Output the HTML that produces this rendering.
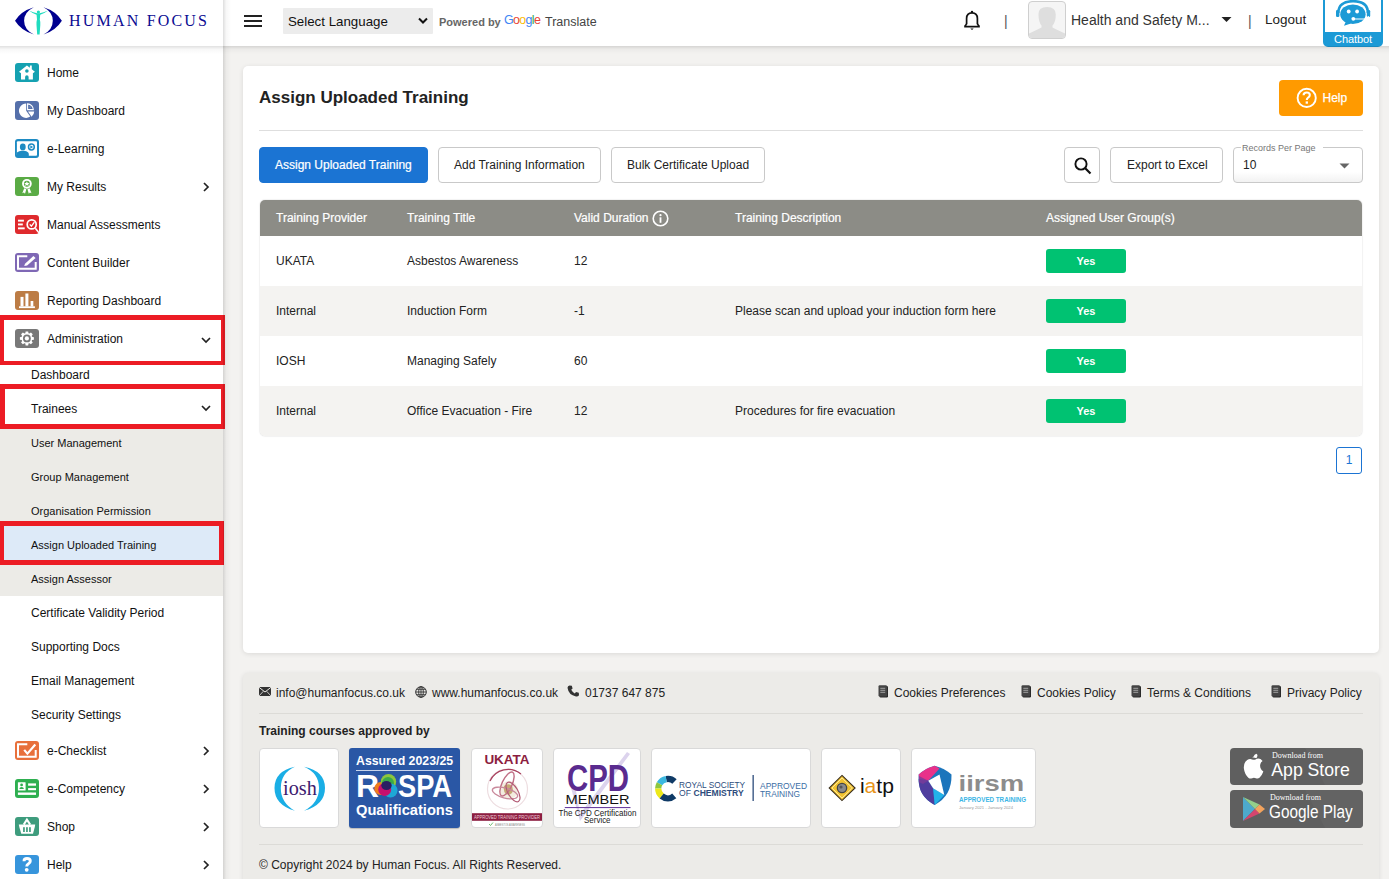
<!DOCTYPE html>
<html><head><meta charset="utf-8">
<style>
*{box-sizing:border-box;margin:0;padding:0}
html,body{width:1389px;height:879px;overflow:hidden}
body{position:relative;background:#f3f2f0;font-family:"Liberation Sans",sans-serif;color:#222;font-size:12px}
.a{position:absolute}
.t{position:absolute;white-space:nowrap;line-height:20px}
/* sidebar */
#sb{position:absolute;left:0;top:0;width:223px;height:879px;background:#fff}
#sbsh{position:absolute;left:223px;top:0;width:8px;height:879px;background:linear-gradient(to right,rgba(0,0,0,.13),rgba(0,0,0,.03) 40%,rgba(0,0,0,0))}
#hdsh{position:absolute;left:0;top:46px;width:1389px;height:8px;background:linear-gradient(to bottom,rgba(0,0,0,.12),rgba(0,0,0,.03) 40%,rgba(0,0,0,0))}
.ic{position:absolute;left:15px;width:24px;height:19px;border-radius:3px}
.ic svg{position:absolute;left:0;top:0}
.mi{position:absolute;left:47px;font-size:12px;line-height:20px;white-space:nowrap;color:#111}
.chr{position:absolute;left:201px;width:10px;height:10px}
.sub{position:absolute;left:31px;font-size:12px;line-height:20px;white-space:nowrap;color:#111}
.sub2{position:absolute;left:31px;font-size:11px;line-height:20px;white-space:nowrap;color:#111}
.red{position:absolute;border:solid #ec1c24}
/* header */
#hd{position:absolute;left:223px;top:0;width:1166px;height:46px;background:#fff}
/* card */
#card{position:absolute;left:243px;top:66px;width:1136px;height:587px;background:#fff;border-radius:5px;box-shadow:0 1px 5px rgba(0,0,0,.1)}
.btn{position:absolute;top:147px;height:36px;border:1px solid #c9c9c9;border-radius:4px;background:#fff;font-size:12px;line-height:34px;white-space:nowrap;color:#222}
</style></head>
<body>
<div id="sb">
  <!-- logo -->
  <svg class="a" style="left:0;top:0" width="70" height="42" viewBox="0 0 70 42">
    <path d="M15 20.7 Q21 11 33.9 7.2 Q24.1 12 24.1 20.7 Q24.1 29.5 33.9 34.5 Q21 30.5 15 20.7Z" fill="#00008f"/>
    <path d="M61.9 20.7 Q55.8 11 43.5 7.2 Q52.8 12 52.8 20.7 Q52.8 29.5 43.5 34.5 Q55.8 30.5 61.9 20.7Z" fill="#00008f"/>
    <circle cx="38.4" cy="12" r="1.6" fill="#1fdcbf"/>
    <path d="M28.9 10.4 Q33 13.5 36.6 14.8 L37 19.5 Q36.2 22 36.5 25 L37.2 34.6 H39.6 L40.3 25 Q40.6 22 39.8 19.5 L40.2 14.8 Q43.8 13.5 48.2 10.4 Q43.2 12.3 39.7 13.3 H37.1 Q33.6 12.3 28.9 10.4Z" fill="#1fdcbf"/>
  </svg>
  <div class="t" style="left:69px;top:7px;font-family:'Liberation Serif',serif;font-size:16px;line-height:28px;letter-spacing:2.2px;color:#0b0b92">HUMAN FOCUS</div>

  <!-- menu -->
  <div class="ic" style="top:63px;background:#15a1b1"><svg width="24" height="19" viewBox="0 0 24 19"><path d="M11.9 2.4 L4 8.8 L6 10.2 V16.6 H10.1 V13.9 A1.75 1.75 0 0 1 13.6 13.9 V16.6 H17.9 V10.2 L19.9 8.8 L16.8 6.3 V2.6 H14.9 V4.8 Z" fill="#fff"/><circle cx="11.9" cy="8" r="1.8" fill="#15a1b1"/></svg></div>
  <div class="mi" style="top:63px">Home</div>
  <div class="ic" style="top:101px;background:#5570aa"><svg width="24" height="19" viewBox="0 0 24 19"><path d="M11.2 9.7 V2.5 A7.2 7.2 0 1 0 15.3 15.6 Z" fill="#fff"/><path d="M13 10.6 H19.2 A6.2 6.2 0 0 1 16.6 15.7 Z" fill="#fff"/><path d="M12.6 8.6 V2.9 A5.7 5.7 0 0 1 18.3 8.6 Z" fill="none" stroke="#fff" stroke-width="1.1"/><path d="M14.6 6.6 V4.9 A3.7 3.7 0 0 1 16.3 6.6Z" fill="#fff" opacity=".35"/></svg></div>
  <div class="mi" style="top:101px">My Dashboard</div>
  <div class="ic" style="top:139px;background:#1e8bc3"><svg width="24" height="19" viewBox="0 0 24 19"><rect x="1.9" y="2.2" width="20.1" height="14.6" rx="1" fill="#fff"/><ellipse cx="7.8" cy="7.9" rx="2.9" ry="3.4" fill="#1e8bc3"/><path d="M1.9 13.4 Q4 12 6.8 11.8 H8.8 Q11.8 12 13.2 13.6 Q13.8 14.3 13.8 15.5 V17 H1.9Z" fill="#1e8bc3"/><circle cx="16.4" cy="8" r="2.9" fill="none" stroke="#1e8bc3" stroke-width="1.5"/><path d="M15.3 6.3 L18.1 8 L15.3 9.7Z" fill="#1e8bc3"/></svg></div>
  <div class="mi" style="top:139px">e-Learning</div>
  <div class="ic" style="top:177px;background:#5aab45"><svg width="24" height="19" viewBox="0 0 24 19"><circle cx="11.9" cy="6.8" r="3.9" fill="none" stroke="#fff" stroke-width="1.9"/><path d="M11.9 4.2 L12.7 6 L14.6 6.1 L13.2 7.3 L13.6 9.1 L11.9 8.1 L10.2 9.1 L10.6 7.3 L9.2 6.1 L11.1 6Z" fill="#fff"/><path d="M9.2 11.2 L7.3 16.2 L8.9 15.4 L10 16.8 L11.3 12.2Z M14.6 11.2 L16.5 16.2 L14.9 15.4 L13.8 16.8 L12.5 12.2Z" fill="#fff"/></svg></div>
  <div class="mi" style="top:177px">My Results</div>
  <svg class="chr" style="top:182px" width="10" height="10" viewBox="0 0 10 10"><path d="M3 1 L7 5 L3 9" fill="none" stroke="#222" stroke-width="1.7"/></svg>
  <div class="ic" style="top:215px;background:#df2a2d"><svg width="24" height="19" viewBox="0 0 24 19"><rect x="3" y="4.7" width="5.9" height="1.9" fill="#fff"/><rect x="3" y="8.5" width="4.8" height="1.9" fill="#fff"/><rect x="3" y="12.4" width="6.7" height="1.9" fill="#fff"/><circle cx="16.7" cy="9.4" r="4.5" fill="none" stroke="#fff" stroke-width="1.7"/><path d="M14.8 9.3 L16.4 11.2 L19.4 7.2" fill="none" stroke="#fff" stroke-width="1.3"/><path d="M20.3 13.2 L24 17.8" stroke="#fff" stroke-width="1.6"/></svg></div>
  <div class="mi" style="top:215px">Manual Assessments</div>
  <div class="ic" style="top:253px;background:#7f68b5"><svg width="24" height="19" viewBox="0 0 24 19"><path d="M12.3 3.2 H3 V15.8 H20.7 V9.1" fill="none" stroke="#fff" stroke-width="2"/><path d="M9.2 12.9 L10 10.7 L18.4 3 L20.6 5.1 L12.1 12.6Z" fill="#fff"/></svg></div>
  <div class="mi" style="top:253px">Content Builder</div>
  <div class="ic" style="top:291px;background:#bc7c45"><svg width="24" height="19" viewBox="0 0 24 19"><rect x="5.5" y="5.9" width="3" height="9.5" fill="#fff"/><rect x="10.4" y="2.5" width="3" height="13" fill="#fff"/><rect x="15.6" y="10" width="2.7" height="5.5" fill="#fff"/><rect x="4" y="15.3" width="15.9" height="1.8" fill="#fff"/></svg></div>
  <div class="mi" style="top:291px">Reporting Dashboard</div>
  <div class="ic" style="top:329px;background:#787878"><svg width="24" height="19" viewBox="0 0 24 19"><path d="M10.30 4.24 L10.63 2.41 L13.17 2.41 L13.50 4.24 L14.42 4.62 L15.94 3.56 L17.74 5.36 L16.68 6.88 L17.06 7.80 L18.89 8.13 L18.89 10.67 L17.06 11.00 L16.68 11.92 L17.74 13.44 L15.94 15.24 L14.42 14.18 L13.50 14.56 L13.17 16.39 L10.63 16.39 L10.30 14.56 L9.38 14.18 L7.86 15.24 L6.06 13.44 L7.12 11.92 L6.74 11.00 L4.91 10.67 L4.91 8.13 L6.74 7.80 L7.12 6.88 L6.06 5.36 L7.86 3.56 L9.38 4.62Z" fill="#fff"/><circle cx="11.9" cy="9.4" r="3.9" fill="#787878"/><circle cx="11.9" cy="9.4" r="2.1" fill="#fff"/></svg></div>
  <div class="mi" style="top:329px">Administration</div>
  <svg class="chr" style="top:335px" width="10" height="10" viewBox="0 0 10 10"><path d="M1 3 L5 7 L9 3" fill="none" stroke="#222" stroke-width="1.7"/></svg>
  <div class="sub" style="top:365px">Dashboard</div>
  <div class="sub" style="top:399px">Trainees</div>
  <svg class="chr" style="top:403px" width="10" height="10" viewBox="0 0 10 10"><path d="M1 3 L5 7 L9 3" fill="none" stroke="#222" stroke-width="1.7"/></svg>
  <div class="a" style="left:0;top:429px;width:223px;height:167px;background:#ecebe7"></div>
  <div class="a" style="left:0;top:526px;width:223px;height:34px;background:#ddeaf8"></div>
  <div class="sub2" style="top:433px">User Management</div>
  <div class="sub2" style="top:467px">Group Management</div>
  <div class="sub2" style="top:501px">Organisation Permission</div>
  <div class="sub2" style="top:535px">Assign Uploaded Training</div>
  <div class="sub2" style="top:569px">Assign Assessor</div>
  <div class="sub" style="top:603px">Certificate Validity Period</div>
  <div class="sub" style="top:637px">Supporting Docs</div>
  <div class="sub" style="top:671px">Email Management</div>
  <div class="sub" style="top:705px">Security Settings</div>
  <div class="ic" style="top:741px;background:#e8703b"><svg width="24" height="19" viewBox="0 0 24 19"><path d="M12.3 3.2 H3 V15.8 H20.7 V9.1" fill="none" stroke="#fff" stroke-width="2"/><path d="M9.2 8.9 L12.4 12.6 L20.3 3.5" fill="none" stroke="#fff" stroke-width="2.2"/></svg></div>
  <div class="mi" style="top:741px">e-Checklist</div>
  <svg class="chr" style="top:746px" width="10" height="10" viewBox="0 0 10 10"><path d="M3 1 L7 5 L3 9" fill="none" stroke="#222" stroke-width="1.7"/></svg>
  <div class="ic" style="top:779px;background:#2eaf50"><svg width="24" height="19" viewBox="0 0 24 19"><rect x="2.9" y="3.3" width="7.7" height="8.3" rx=".5" fill="#fff"/><circle cx="6.6" cy="5.9" r="1.4" fill="#2eaf50"/><path d="M4.3 10 Q4.6 8.1 6.6 8.1 Q8.6 8.1 8.9 10Z" fill="#2eaf50"/><rect x="13.1" y="4.4" width="7.9" height="2.3" fill="#fff"/><rect x="13.1" y="9.1" width="7.9" height="2.1" fill="#fff"/><rect x="2.9" y="13.5" width="18.1" height="2.4" fill="#fff"/></svg></div>
  <div class="mi" style="top:779px">e-Competency</div>
  <svg class="chr" style="top:784px" width="10" height="10" viewBox="0 0 10 10"><path d="M3 1 L7 5 L3 9" fill="none" stroke="#222" stroke-width="1.7"/></svg>
  <div class="ic" style="top:817px;background:#3e9c7d"><svg width="24" height="19" viewBox="0 0 24 19"><path d="M8.7 7.6 L11.9 2.6 L15.2 7.6" fill="none" stroke="#fff" stroke-width="2"/><path d="M3.8 7.5 H20.2 L19.8 10 L18 16.8 H6.3 L4.3 10Z" fill="#fff"/><rect x="8.1" y="10.2" width="1.7" height="4.8" fill="#3e9c7d"/><rect x="11.1" y="10.2" width="1.7" height="4.8" fill="#3e9c7d"/><rect x="14.1" y="10.2" width="1.7" height="4.8" fill="#3e9c7d"/></svg></div>
  <div class="mi" style="top:817px">Shop</div>
  <svg class="chr" style="top:822px" width="10" height="10" viewBox="0 0 10 10"><path d="M3 1 L7 5 L3 9" fill="none" stroke="#222" stroke-width="1.7"/></svg>
  <div class="ic" style="top:855px;background:#3795dc"><svg width="24" height="19" viewBox="0 0 24 19"><path d="M9 6.2 Q9 3.5 12 3.5 Q15.3 3.5 15.3 6 Q15.3 7.8 13.5 8.8 Q11.7 9.8 11.7 11.6" fill="none" stroke="#fff" stroke-width="2.9"/><circle cx="11.7" cy="14.8" r="1.9" fill="#fff"/></svg></div>
  <div class="mi" style="top:855px">Help</div>
  <svg class="chr" style="top:860px" width="10" height="10" viewBox="0 0 10 10"><path d="M3 1 L7 5 L3 9" fill="none" stroke="#222" stroke-width="1.7"/></svg>
<!-- red annotation boxes -->
  <div class="red" style="left:0;top:315px;width:225px;height:50px;border-width:5px 4.5px 4.5px 4px"></div>
  <div class="red" style="left:0;top:384px;width:225px;height:45px;border-width:5px 4.5px 5px 5px"></div>
  <div class="red" style="left:0;top:521px;width:224px;height:44px;border-width:5px 5px 5px 4px"></div>
</div>
<div id="hd">
  <div class="a" style="left:21px;top:15px;width:18px;height:2.4px;background:#222"></div>
  <div class="a" style="left:21px;top:20px;width:18px;height:2.4px;background:#222"></div>
  <div class="a" style="left:21px;top:25px;width:18px;height:2.4px;background:#222"></div>
  <div class="a" style="left:60px;top:8px;width:150px;height:26px;background:#ececec;border-radius:1px"></div>
  <div class="t" style="left:65px;top:12px;font-size:13.3px;color:#111">Select Language</div>
  <svg class="a" style="left:195px;top:17px" width="10" height="8" viewBox="0 0 10 8"><path d="M1 1.5 L5 5.5 L9 1.5" fill="none" stroke="#111" stroke-width="2"/></svg>
  <div class="t" style="left:216px;top:12px;font-size:11px;font-weight:bold;color:#666">Powered by</div>
  <div class="t" style="left:281px;top:9.8px;font-size:12.5px;letter-spacing:-0.7px;font-family:'Liberation Sans',sans-serif"><span style="color:#4285f4">G</span><span style="color:#ea4335">o</span><span style="color:#fbbc05">o</span><span style="color:#4285f4">g</span><span style="color:#34a853">l</span><span style="color:#ea4335">e</span></div>
  <div class="t" style="left:322px;top:12px;font-size:12.5px;color:#444">Translate</div>
  <!-- right -->
  <svg class="a" style="left:0;top:0" width="1166" height="46" viewBox="223 0 1166 46"><path d="M966.6 24.3 V18.6 Q966.6 12.9 972 12.9 Q977.4 12.9 977.4 18.6 V24.3" fill="none" stroke="#111" stroke-width="1.7"/><path d="M964.2 26.6 H979.8 M966.6 24 L964.6 26.4 M977.4 24 L979.4 26.4" fill="none" stroke="#111" stroke-width="1.6"/><circle cx="972" cy="11.9" r="1.2" fill="#111"/><path d="M970.3 28.6 H973.7 L972 30.1Z" fill="#111"/></svg>
  <div class="t" style="left:781px;top:11px;font-size:14px;color:#555">|</div>
  <div class="a" style="left:805px;top:1px;width:38px;height:38px;border:1px solid #cfcfcf;border-radius:4px;background:#f5f5f5;overflow:hidden"><svg class="a" style="left:-1px;top:-1px" width="38" height="38" viewBox="1028 1 38 38"><path d="M1038.5 14.5 Q1038.2 6.9 1047 6.9 Q1055.8 6.9 1055.8 14.5 Q1055.8 22 1052.5 25.5 L1052.5 27.6 Q1058 30.5 1066 34 V40 H1028 V34 Q1036 30.5 1041.5 27.6 L1041.5 25.5 Q1038.5 22 1038.5 14.5Z" fill="#dedede"/></svg></div>
  <div class="t" style="left:848px;top:10px;font-size:14px;color:#333">Health and Safety M...</div>
  <svg class="a" style="left:998px;top:16px" width="11" height="7" viewBox="0 0 11 7"><path d="M0.5 1 H10.5 L5.5 6Z" fill="#222"/></svg>
  <div class="t" style="left:1025px;top:11px;font-size:14px;color:#555">|</div>
  <div class="t" style="left:1042px;top:10px;font-size:13.5px;color:#222">Logout</div>
  <div class="a" style="left:1100px;top:-4px;width:60px;height:51px;border:2px solid #1c9ad6;border-radius:0 0 5px 5px;background:linear-gradient(#fff 0 34px,#1c9ad6 34px);overflow:hidden">
    <svg class="a" style="left:-2px;top:2px" width="60" height="32" viewBox="1323 0 60 32"><path d="M1338.3 13 Q1338.3 1.2 1353.1 1.2 Q1367.9 1.2 1367.9 13" fill="none" stroke="#1c9ad6" stroke-width="2.6"/><rect x="1336" y="10" width="3.4" height="7" rx="1.3" fill="#1c9ad6"/><rect x="1366.8" y="10" width="3.4" height="7" rx="1.3" fill="#1c9ad6"/><ellipse cx="1352.9" cy="14.2" rx="12.7" ry="9.8" fill="#1c9ad6"/><path d="M1346 21 L1344 25.7 L1351 23.5Z" fill="#1c9ad6"/><circle cx="1348.7" cy="11.5" r="1.9" fill="#fff"/><circle cx="1357.1" cy="11.5" r="1.9" fill="#fff"/><path d="M1353.3 19 H1365 Q1368 18.5 1368.5 16" fill="none" stroke="#fff" stroke-width="1.1"/><circle cx="1353.3" cy="18.8" r="1.9" fill="#fff"/></svg>
    <div class="a" style="left:-2px;top:34px;width:60px;height:16px;background:#1c9ad6;color:#fff;font-size:11px;line-height:14px;text-align:center;letter-spacing:-0.1px">Chatbot</div>
  </div>
</div>

<div id="card"></div>
<div class="t" style="left:259px;top:86px;font-size:17px;font-weight:bold;color:#222;line-height:24px">Assign Uploaded Training</div>
<div class="a" style="left:1279px;top:80px;width:84px;height:36px;background:#ff9a00;border-radius:4px">
  <svg class="a" style="left:17px;top:7px" width="22" height="22" viewBox="0 0 22 22"><circle cx="10.7" cy="10.9" r="9.1" fill="none" stroke="#fff" stroke-width="1.9"/><path d="M7.6 8.2 Q7.6 5.5 10.7 5.5 Q13.8 5.5 13.8 8 Q13.8 9.6 12.1 10.6 Q10.8 11.4 10.8 13" fill="none" stroke="#fff" stroke-width="2.1"/><rect x="9.65" y="14.4" width="2.3" height="2.3" fill="#fff"/></svg>
  <div class="t" style="left:43.5px;top:8px;font-size:12px;color:#fff;-webkit-text-stroke:0.25px #fff">Help</div>
</div>
</div>
<div class="a" style="left:259px;top:130px;width:1104px;height:1px;background:#dedede"></div>
<div class="btn" style="left:259px;width:169px;background:#1b74d3;border-color:#1b74d3;color:#fff;padding-left:15px;-webkit-text-stroke:0.2px #fff">Assign Uploaded Training</div>
<div class="btn" style="left:438px;width:163px;padding-left:15px">Add Training Information</div>
<div class="btn" style="left:611px;width:154px;padding-left:15px">Bulk Certificate Upload</div>
<div class="btn" style="left:1064px;width:36px"><svg class="a" style="left:8px;top:8px" width="20" height="20" viewBox="0 0 20 20"><circle cx="8" cy="8" r="5.6" fill="none" stroke="#111" stroke-width="1.9"/><path d="M12 12 L17.5 17.5" stroke="#111" stroke-width="2.2"/></svg></div>
<div class="btn" style="left:1110px;width:113px;padding-left:16px">Export to Excel</div>
<div class="btn" style="left:1233px;width:130px;background:linear-gradient(to bottom,#fff 70%,#f2f2f2);padding-left:9px;line-height:35px">10</div>
<div class="t" style="left:1241px;top:138.5px;font-size:9px;line-height:18px;color:#777;background:linear-gradient(transparent 8px,#fff 8px);padding:0 7px 0 1px">Records Per Page</div>
<svg class="a" style="left:1339px;top:162.5px" width="11" height="6" viewBox="0 0 11 6"><path d="M0.5 0.5 H10.5 L5.5 5.5Z" fill="#666"/></svg>
<!-- table -->
<div class="a" style="left:260px;top:200px;width:1102px;height:236px;border-radius:5px;box-shadow:0 0 1.5px rgba(0,0,0,.25);overflow:hidden;background:#fff">
  <div class="a" style="left:0;top:0;width:1103px;height:36px;background:#8c8c86"></div>
  <div class="a" style="left:0;top:86px;width:1103px;height:50px;background:#f4f3f1"></div>
  <div class="a" style="left:0;top:186px;width:1103px;height:51px;background:#f4f3f1"></div>
</div>
<div class="t" style="left:276px;top:208px;color:#fff;-webkit-text-stroke:0.2px #fff">Training Provider</div>
<div class="t" style="left:407px;top:208px;color:#fff;-webkit-text-stroke:0.2px #fff">Training Title</div>
<div class="t" style="left:574px;top:208px;color:#fff;-webkit-text-stroke:0.2px #fff">Valid Duration</div>
<svg class="a" style="left:652px;top:210px" width="17" height="17" viewBox="0 0 17 17"><circle cx="8.5" cy="8.5" r="7.3" fill="none" stroke="#fff" stroke-width="1.6"/><circle cx="8.5" cy="5.2" r="1.1" fill="#fff"/><rect x="7.6" y="7.3" width="1.8" height="5.5" fill="#fff"/></svg>
<div class="t" style="left:735px;top:208px;color:#fff;-webkit-text-stroke:0.2px #fff">Training Description</div>
<div class="t" style="left:1046px;top:208px;color:#fff;-webkit-text-stroke:0.2px #fff">Assigned User Group(s)</div>
<div class="t" style="left:276px;top:251px">UKATA</div>
<div class="t" style="left:407px;top:251px">Asbestos Awareness</div>
<div class="t" style="left:574px;top:251px">12</div>
<div class="a" style="left:1046px;top:249px;width:80px;height:24px;background:#00c272;border-radius:3px;color:#fff;font-size:11px;font-weight:bold;line-height:24px;text-align:center">Yes</div>
<div class="t" style="left:276px;top:301px">Internal</div>
<div class="t" style="left:407px;top:301px">Induction Form</div>
<div class="t" style="left:574px;top:301px">-1</div>
<div class="t" style="left:735px;top:301px">Please scan and upload your induction form here</div>
<div class="a" style="left:1046px;top:299px;width:80px;height:24px;background:#00c272;border-radius:3px;color:#fff;font-size:11px;font-weight:bold;line-height:24px;text-align:center">Yes</div>
<div class="t" style="left:276px;top:351px">IOSH</div>
<div class="t" style="left:407px;top:351px">Managing Safely</div>
<div class="t" style="left:574px;top:351px">60</div>
<div class="a" style="left:1046px;top:349px;width:80px;height:24px;background:#00c272;border-radius:3px;color:#fff;font-size:11px;font-weight:bold;line-height:24px;text-align:center">Yes</div>
<div class="t" style="left:276px;top:401px">Internal</div>
<div class="t" style="left:407px;top:401px">Office Evacuation - Fire</div>
<div class="t" style="left:574px;top:401px">12</div>
<div class="t" style="left:735px;top:401px">Procedures for fire evacuation</div>
<div class="a" style="left:1046px;top:399px;width:80px;height:24px;background:#00c272;border-radius:3px;color:#fff;font-size:11px;font-weight:bold;line-height:24px;text-align:center">Yes</div>
<div class="a" style="left:1336px;top:447px;width:26px;height:27px;border:1px solid #1b74d3;border-radius:3px;color:#1b74d3;font-size:12px;line-height:25px;text-align:center">1</div>

<!-- footer -->
<div class="a" style="left:243px;top:673px;width:1136px;height:220px;background:#ecebe8;border-radius:5px;box-shadow:0 1px 5px rgba(0,0,0,.1)"></div>
<svg class="a" style="left:259px;top:687px" width="12" height="9" viewBox="0 0 12 9"><rect x="0" y="0" width="12" height="9" fill="#333"/><path d="M0 0.3 L6 5 L12 0.3" fill="none" stroke="#ecebe7" stroke-width="1"/><path d="M0 9 L4.3 4.3 M12 9 L7.7 4.3" stroke="#ecebe7" stroke-width=".8"/></svg>
<div class="t" style="left:276px;top:683px">info@humanfocus.co.uk</div>
<svg class="a" style="left:415px;top:686px" width="12" height="12" viewBox="0 0 12 12"><circle cx="6" cy="6" r="5.3" fill="none" stroke="#333" stroke-width="1"/><ellipse cx="6" cy="6" rx="2.3" ry="5.3" fill="none" stroke="#333" stroke-width=".9"/><path d="M0.7 6 H11.3 M1.5 3.3 H10.5 M1.5 8.7 H10.5 M6 0.7 V11.3" stroke="#333" stroke-width=".9"/></svg>
<div class="t" style="left:432px;top:683px">www.humanfocus.co.uk</div>
<svg class="a" style="left:567px;top:685px" width="13" height="12" viewBox="0 0 13 12"><path d="M2.5 0.5 L4.8 0.8 L5.6 3.6 L4.2 4.8 Q5.5 7.3 7.8 8.4 L9 7 L11.8 7.8 L12 10.3 Q11 11.8 9 11.5 Q1.5 10 0.5 2.8 Q0.7 0.8 2.5 0.5Z" fill="#333"/></svg>
<div class="t" style="left:585px;top:683px">01737 647 875</div>
<svg class="a" style="left:878px;top:685px" width="11" height="13" viewBox="0 0 11 13"><rect x="1.5" y="1" width="8.5" height="11.5" rx="1.2" fill="#2a2a2a"/><rect x="0.5" y="0.3" width="8.5" height="11.2" rx="1.2" fill="#444"/><path d="M2.3 3.3 H7.2 M2.3 5.3 H7.2 M2.3 7.3 H7.2" stroke="#bbb" stroke-width=".8"/></svg>
<div class="t" style="left:894px;top:683px">Cookies Preferences</div>
<svg class="a" style="left:1021px;top:685px" width="11" height="13" viewBox="0 0 11 13"><rect x="1.5" y="1" width="8.5" height="11.5" rx="1.2" fill="#2a2a2a"/><rect x="0.5" y="0.3" width="8.5" height="11.2" rx="1.2" fill="#444"/><path d="M2.3 3.3 H7.2 M2.3 5.3 H7.2 M2.3 7.3 H7.2" stroke="#bbb" stroke-width=".8"/></svg>
<div class="t" style="left:1037px;top:683px">Cookies Policy</div>
<svg class="a" style="left:1131px;top:685px" width="11" height="13" viewBox="0 0 11 13"><rect x="1.5" y="1" width="8.5" height="11.5" rx="1.2" fill="#2a2a2a"/><rect x="0.5" y="0.3" width="8.5" height="11.2" rx="1.2" fill="#444"/><path d="M2.3 3.3 H7.2 M2.3 5.3 H7.2 M2.3 7.3 H7.2" stroke="#bbb" stroke-width=".8"/></svg>
<div class="t" style="left:1147px;top:683px">Terms &amp; Conditions</div>
<svg class="a" style="left:1271px;top:685px" width="11" height="13" viewBox="0 0 11 13"><rect x="1.5" y="1" width="8.5" height="11.5" rx="1.2" fill="#2a2a2a"/><rect x="0.5" y="0.3" width="8.5" height="11.2" rx="1.2" fill="#444"/><path d="M2.3 3.3 H7.2 M2.3 5.3 H7.2 M2.3 7.3 H7.2" stroke="#bbb" stroke-width=".8"/></svg>
<div class="t" style="left:1287px;top:683px">Privacy Policy</div>
<div class="a" style="left:259px;top:713px;width:1104px;height:1px;background:#dcdbd7"></div>
<div class="t" style="left:259px;top:721px;font-weight:bold">Training courses approved by</div>
<!-- logos -->
<div class="a" style="left:259px;top:748px;width:80px;height:80px;background:#fff;border:1px solid #d9d9d9;border-radius:4px"></div>
<svg class="a" style="left:259px;top:748px" width="80" height="80" viewBox="0 0 80 80"><path d="M35.9 18.7 Q15.5 23 15.5 40 Q15.5 57 35.9 62.8 Q21.8 55 21.8 40 Q21.8 25 35.9 18.7Z" fill="#1aaee5"/><path d="M45 18.7 Q66 23 66 40 Q66 57 45 62.8 Q60 55 60 40 Q60 25 45 18.7Z" fill="#1aaee5"/><text x="40.9" y="47.3" text-anchor="middle" font-family="Liberation Serif" font-size="21.5" fill="#3d1a6e" textLength="33.7" lengthAdjust="spacingAndGlyphs">iosh</text></svg>
<div class="a" style="left:349px;top:748px;width:111px;height:80px;background:#2a57a5;border-radius:3px;box-shadow:0 1px 1px rgba(0,0,0,.2)"></div>
<div class="t" style="left:356px;top:751px;font-size:12.3px;font-weight:bold;color:#fff;line-height:20px">Assured 2023/25</div>
<div class="a" style="left:356px;top:770px;width:96px;height:1px;background:#c8d4ea"></div>
<svg class="a" style="left:349px;top:770px" width="111" height="58" viewBox="0 0 111 58"><text x="7" y="27.2" font-family="Liberation Sans" font-weight="bold" font-size="30.5" fill="#fff" textLength="23" lengthAdjust="spacingAndGlyphs">R</text><circle cx="31.8" cy="18.5" r="6.5" fill="#f07d1a"/><circle cx="39.5" cy="11.7" r="7.7" fill="#8cc63e"/><circle cx="39" cy="13" r="6" fill="#3aaa49"/><circle cx="41.5" cy="20.5" r="7" fill="#1ea7d6"/><circle cx="35.7" cy="19.5" r="6.5" fill="#c8106e"/><ellipse cx="37.5" cy="15.5" rx="5.2" ry="4.5" fill="#2b1f63"/><text x="49" y="27.2" font-family="Liberation Sans" font-weight="bold" font-size="30.5" fill="#fff" textLength="54" lengthAdjust="spacingAndGlyphs">SPA</text><text x="7" y="44.6" font-family="Liberation Sans" font-weight="bold" font-size="15.5" fill="#fff" textLength="97" lengthAdjust="spacingAndGlyphs">Qualifications</text></svg>
<div class="a" style="left:471px;top:748px;width:72px;height:80px;background:#fff;border:1px solid #d9d9d9;border-radius:4px;overflow:hidden">
  <svg class="a" style="left:-1px;top:-1px" width="72" height="80" viewBox="0 0 72 80"><text x="36" y="16" text-anchor="middle" font-family="Liberation Sans" font-weight="bold" font-size="13.5" fill="#8c1d40">UKATA</text><circle cx="36.5" cy="41" r="20" fill="none" stroke="#eddde0" stroke-width="1.2"/><path d="M19 33 A20 20 0 0 1 50 26" fill="none" stroke="#a8405e" stroke-width="1.2"/><circle cx="38" cy="42" r="9" fill="#f3ece0"/><path d="M33 38 Q36 35 40 37 Q43 40 41 45 Q38 48 35 46 Q32 43 33 38Z" fill="#b89a5a" opacity=".8"/><ellipse cx="36" cy="36" rx="5" ry="13" transform="rotate(25 36 36)" fill="none" stroke="#c06f85" stroke-width="1.4"/><ellipse cx="34" cy="45" rx="13" ry="5" transform="rotate(15 34 45)" fill="none" stroke="#c9899b" stroke-width="1.4"/><ellipse cx="42" cy="44" rx="5" ry="11" transform="rotate(-30 42 44)" fill="none" stroke="#b35a75" stroke-width="1.2"/><rect x="0" y="65.2" width="72" height="7.6" fill="#8c1d40"/><text x="36" y="71.3" text-anchor="middle" font-family="Liberation Sans" font-size="5.5" fill="#f0d0da" textLength="66" lengthAdjust="spacingAndGlyphs">APPROVED TRAINING PROVIDER</text><text x="39" y="78" text-anchor="middle" font-family="Liberation Sans" font-size="3.5" fill="#888" textLength="30" lengthAdjust="spacingAndGlyphs">ASBESTOS AWARENESS</text><path d="M18 76 L19.5 77.5 L22 74.5" stroke="#4caf50" stroke-width=".8" fill="none"/></svg>
</div>
<div class="a" style="left:553px;top:748px;width:88px;height:80px;background:#fff;border:1px solid #d9d9d9;border-radius:4px;overflow:hidden">
  <svg class="a" style="left:-1px;top:-1px" width="88" height="80" viewBox="0 0 88 80"><path d="M18 40 L22 37 L27 66 L74 4 L77 6 L27 73Z" fill="#d6cbea" opacity=".85"/><text x="45" y="43" text-anchor="middle" font-family="Liberation Sans" font-weight="bold" font-size="37" fill="#5a2b8f" textLength="62" lengthAdjust="spacingAndGlyphs">CPD</text><text x="44.6" y="55.6" text-anchor="middle" font-family="Liberation Sans" font-size="12.6" fill="#111" textLength="64" lengthAdjust="spacingAndGlyphs">MEMBER</text><rect x="11.8" y="59" width="65.7" height="1.1" fill="#6b3fa0"/><text x="44.6" y="68.3" text-anchor="middle" font-family="Liberation Sans" font-size="8.3" fill="#222" textLength="78" lengthAdjust="spacingAndGlyphs">The CPD Certification</text><text x="44.3" y="75.3" text-anchor="middle" font-family="Liberation Sans" font-size="8.3" fill="#222" textLength="26.5" lengthAdjust="spacingAndGlyphs">Service</text></svg>
</div>
<div class="a" style="left:651px;top:748px;width:160px;height:80px;background:#fff;border:1px solid #d9d9d9;border-radius:4px;overflow:hidden">
  <svg class="a" style="left:-1px;top:-1px" width="160" height="80" viewBox="0 0 160 80"><g fill="none" stroke-width="6.3"><path d="M23.5 33.5 A9.7 9.7 0 0 0 15.2 31.05" stroke="#0f3a66"/><path d="M15.2 31.05 A9.7 9.7 0 0 0 8.5 35.75" stroke="#3bb8e0"/><path d="M8.5 35.75 A9.7 9.7 0 0 0 7.2 40.6" stroke="#8dc63f"/><path d="M7.2 40.6 A9.7 9.7 0 0 0 10.66 48.03" stroke="#ece81a"/><path d="M10.66 48.03 A9.7 9.7 0 0 0 23.26 47.92" stroke="#0f3a66"/></g><text x="28.1" y="39.9" font-family="Liberation Sans" font-size="8.6" fill="#2d4c7c" textLength="66" lengthAdjust="spacingAndGlyphs">ROYAL SOCIETY</text><text x="28.1" y="48.2" font-family="Liberation Sans" font-size="8.6" fill="#2d4c7c">OF <tspan font-weight="bold">CHEMISTRY</tspan></text><rect x="101.5" y="27" width="1.3" height="26" fill="#2d4c7c"/><text x="109" y="40.5" font-family="Liberation Sans" font-size="8.6" fill="#3b6ea5" textLength="47" lengthAdjust="spacingAndGlyphs">APPROVED</text><text x="109" y="48.5" font-family="Liberation Sans" font-size="8.6" fill="#3b6ea5" textLength="40" lengthAdjust="spacingAndGlyphs">TRAINING</text></svg>
</div>
<div class="a" style="left:821px;top:748px;width:80px;height:80px;background:#fff;border:1px solid #d9d9d9;border-radius:4px;overflow:hidden">
  <svg class="a" style="left:-1px;top:-1px" width="80" height="80" viewBox="0 0 80 80"><path d="M21 27.4 L34.1 40 L21 52.6 L8.2 40Z" fill="#f2c230" stroke="#3a3020" stroke-width="1.1"/><path d="M21 30 L31.3 40 L21 50 L11 40Z" fill="none" stroke="#fff3b0" stroke-width=".8"/><circle cx="21" cy="40" r="5.3" fill="#444"/><circle cx="21" cy="40" r="4" fill="#8a8a8a"/><circle cx="20" cy="39" r="1.6" fill="#555"/><text x="38.9" y="45" font-family="Liberation Sans" font-size="20.5" fill="#111" textLength="34" lengthAdjust="spacingAndGlyphs">i<tspan fill="#e8941a">a</tspan>tp</text></svg>
</div>
<div class="a" style="left:911px;top:748px;width:125px;height:80px;background:#fff;border:1px solid #d9d9d9;border-radius:4px;overflow:hidden">
  <svg class="a" style="left:-1px;top:-1px" width="125" height="80" viewBox="0 0 125 80"><path d="M7.7 26.6 Q15 20 23.7 17.8 Q33 20 40.5 26.6 Q41 48 23.7 56.9 Q6 48 7.7 26.6Z" fill="#1b75bc"/><path d="M7.7 26.6 Q15 20 23.7 17.8 L28.5 20.5 L17.3 32.8 L8 31Z" fill="#e8318a"/><path d="M8 31 L17.3 32.8 L22.1 40.2 L23.7 56.9 Q7 48 7.8 31Z" fill="#4f3d9e"/><path d="M8 28 L17.3 32.8 L12 36 L7.8 34Z" fill="#7a3b98" opacity=".8"/><path d="M22.1 40.2 L33.3 47 L23.7 56.9Z" fill="#22b3e8"/><path d="M17.3 32.8 L28.5 26.4 L33.3 47 L22.1 40.2Z" fill="#fff"/><text x="47.6" y="42.5" font-family="Liberation Sans" font-weight="bold" font-size="22.5" fill="#8c8c8c" textLength="65.6" lengthAdjust="spacingAndGlyphs">iirsm</text><text x="48" y="54.3" font-family="Liberation Sans" font-weight="bold" font-size="7" fill="#3cb6e6" textLength="67" lengthAdjust="spacingAndGlyphs">APPROVED TRAINING</text><text x="48" y="61" font-family="Liberation Sans" font-size="4" fill="#999" textLength="54" lengthAdjust="spacingAndGlyphs">January 2021 - January 2024</text></svg>
</div>
<!-- app stores -->
<div class="a" style="left:1230px;top:748px;width:133px;height:37px;background:#5f5f5f;border-radius:4px;overflow:hidden">
  <svg class="a" style="left:0;top:0" width="133" height="37" viewBox="0 0 133 37"><path d="M75 0 L133 0 L133 37 L95 37Z" fill="#666" opacity=".6"/><g transform="translate(23.6 18.4) scale(1.25) translate(-21.8 -18.6)"><path d="M20.5 11.5 Q22.5 11.2 24 12 Q25.8 9.5 24 8.5 Q22.5 9 21.5 11 Z" fill="#fff"/><path d="M23.3 13 Q26.5 11.2 29 14.3 Q26.2 16.3 27.3 19.8 Q28.2 22 29.6 22.7 Q28.5 26 26.5 27.7 Q25.2 28.8 23.6 28 Q22 27.3 20.6 28 Q19 28.8 17.8 27.8 Q14.5 24.7 14 20 Q13.7 15.5 16.7 13.5 Q18.5 12.3 20.6 13 Q22 13.5 23.3 13Z" fill="#fff"/></g><text x="42" y="10" font-family="Liberation Serif" font-size="8.3" fill="#fff" textLength="51" lengthAdjust="spacingAndGlyphs">Download from</text><text x="41.3" y="27.5" font-family="Liberation Sans" font-size="18" fill="#fff" textLength="78.5" lengthAdjust="spacingAndGlyphs">App Store</text></svg>
</div>
<div class="a" style="left:1230px;top:790px;width:133px;height:38px;background:#5f5f5f;border-radius:4px;overflow:hidden">
  <svg class="a" style="left:0;top:0" width="133" height="38" viewBox="0 0 133 38"><path d="M75 0 L133 0 L133 38 L95 38Z" fill="#666" opacity=".6"/><path d="M13 7 L13 31 L25 19Z" fill="#4da9cc"/><path d="M13 7 L25 19 L29.5 14.5Z" fill="#93d08a"/><path d="M13 31 L25 19 L29.5 23.5Z" fill="#d4456e"/><path d="M25 19 L29.5 14.5 L35 19 L29.5 23.5Z" fill="#f3a35d"/><text x="40" y="10" font-family="Liberation Serif" font-size="8.3" fill="#fff" textLength="51" lengthAdjust="spacingAndGlyphs">Download from</text><text x="39.1" y="28" font-family="Liberation Sans" font-size="18" fill="#fff" textLength="83.5" lengthAdjust="spacingAndGlyphs">Google Play</text></svg>
</div>
<div class="a" style="left:259px;top:844px;width:1104px;height:1px;background:#dcdbd7"></div>
<div class="t" style="left:259px;top:855px">© Copyright 2024 by Human Focus. All Rights Reserved.</div>
<div id="sbsh"></div>
<div id="hdsh"></div>
</body></html>
